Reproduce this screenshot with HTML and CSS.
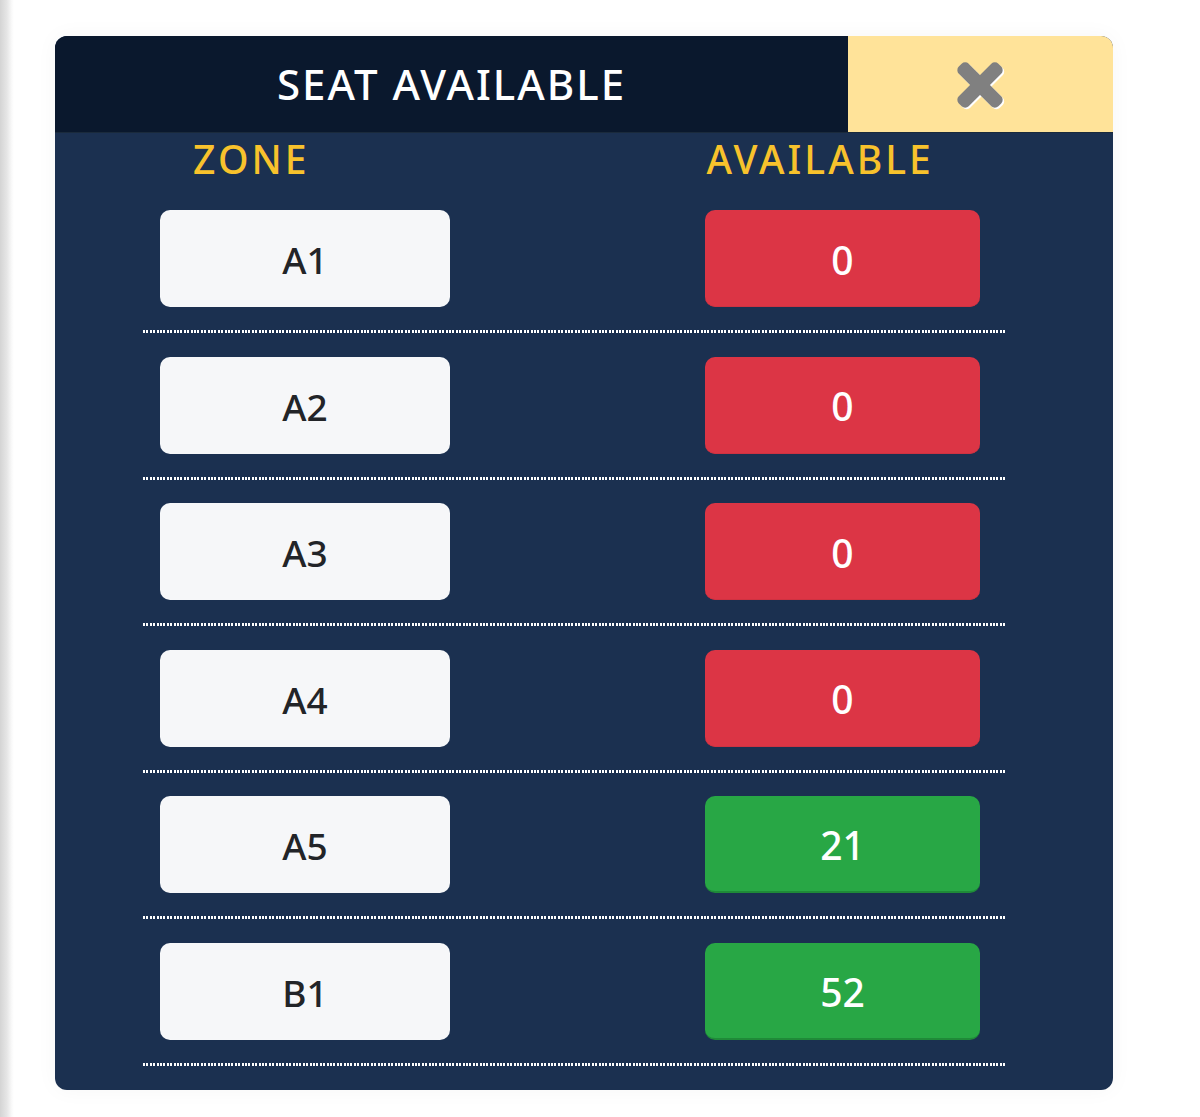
FILE: index.html
```html
<!DOCTYPE html>
<html>
<head>
<meta charset="utf-8">
<link rel="stylesheet" href="styles.css">
</head>
<body>
<div class="edge"></div>
<div class="page">
  <div class="modal">
    <div class="head">
      <div class="title">SEAT AVAILABLE</div>
      <div class="close">
        <svg class="x-icon" width="58" height="58" viewBox="0 0 58 58">
          <g transform="translate(1.5 1.5)" fill="#ffffff">
            <rect x="21" y="0" width="14" height="56" rx="5" transform="rotate(45 28 28)"/>
            <rect x="21" y="0" width="14" height="56" rx="5" transform="rotate(-45 28 28)"/>
          </g>
          <g fill="#808080">
            <rect x="21" y="0" width="14" height="56" rx="5" transform="rotate(45 28 28)"/>
            <rect x="21" y="0" width="14" height="56" rx="5" transform="rotate(-45 28 28)"/>
          </g>
        </svg>
      </div>
    </div>
    <div class="body">
      <div class="labels">
        <div class="lbl lbl-zone">ZONE</div>
        <div class="lbl lbl-avail">AVAILABLE</div>
      </div>
      <div class="row">
        <div class="zone">A1</div>
        <div class="avail red">0</div>
      </div>
      <div class="sep"></div>
      <div class="row">
        <div class="zone">A2</div>
        <div class="avail red">0</div>
      </div>
      <div class="sep"></div>
      <div class="row">
        <div class="zone">A3</div>
        <div class="avail red">0</div>
      </div>
      <div class="sep"></div>
      <div class="row">
        <div class="zone">A4</div>
        <div class="avail red">0</div>
      </div>
      <div class="sep"></div>
      <div class="row">
        <div class="zone">A5</div>
        <div class="avail green">21</div>
      </div>
      <div class="sep"></div>
      <div class="row">
        <div class="zone">B1</div>
        <div class="avail green">52</div>
      </div>
      <div class="sep"></div>
    </div>
  </div>
</div>
</body>
</html>
```

FILE: styles.css
```css
html, body {
  margin: 0;
  padding: 0;
  background: #ffffff;
}
body {
  display: flex;
  min-height: 1117px;
  font-family: "Noto Sans", "Open Sans", sans-serif;
}
.edge {
  width: 14px;
  flex: none;
  background: linear-gradient(to right, #d4d4d4 0%, #e6e6e6 50%, #fafafa 85%, #ffffff 100%);
}
.page {
  padding: 36px 0 0 41px;
}
.modal {
  width: 1058px;
  border-radius: 12px;
  overflow: hidden;
  background: #1b3050;
  box-shadow: 0 0 22px rgba(0, 0, 0, 0.04);
}
.head {
  display: flex;
  height: 97px;
  border-bottom: 1px solid #1a2a3c;
  box-sizing: border-box;
}
.title {
  flex: 1;
  background: #0a182d;
  color: #ffffff;
  font-size: 42px;
  font-weight: 500;
  letter-spacing: 2px;
  display: flex;
  align-items: center;
  justify-content: center;
  padding-bottom: 2px;
}
.close {
  width: 265px;
  background: #ffe399;
  display: flex;
  align-items: center;
  justify-content: center;
}
.x-icon {
  display: block;
  margin: 3px 0 0 0;
}
.body {
  padding: 3px 0 24px 0;
}
.labels {
  display: flex;
  height: 46px;
  line-height: 46px;
  margin-bottom: 28px;
  color: #f8c22c;
  font-size: 39px;
  font-weight: 500;
  letter-spacing: 3px;
}
.lbl-zone {
  margin-left: 138px;
}
.lbl-avail {
  margin-left: 397px;
}
.row {
  display: flex;
  padding-left: 105px;
}
.zone, .avail {
  height: 97px;
  border-radius: 10px;
  display: flex;
  align-items: center;
  justify-content: center;
  font-size: 37px;
  font-weight: 500;
  box-sizing: border-box;
  padding-top: 2px;
}
.zone {
  width: 290px;
  background: #f6f7f9;
  color: #222428;
}
.avail {
  width: 275px;
  margin-left: 255px;
  color: #ffffff;
  font-size: 39px;
}
.red {
  background: #dc3545;
  border-bottom: 1px solid #cf3241;
}
.green {
  background: #28a745;
  border-bottom: 2px solid #1f8a38;
}
.sep {
  width: 862px;
  height: 3px;
  margin: 23px 0 23.6px 88px;
  background-image: repeating-linear-gradient(to right, #ffffff 0, #ffffff 2px, transparent 2px, transparent 3.4px);
}
.sep:last-child {
  margin-bottom: 0;
}
```
